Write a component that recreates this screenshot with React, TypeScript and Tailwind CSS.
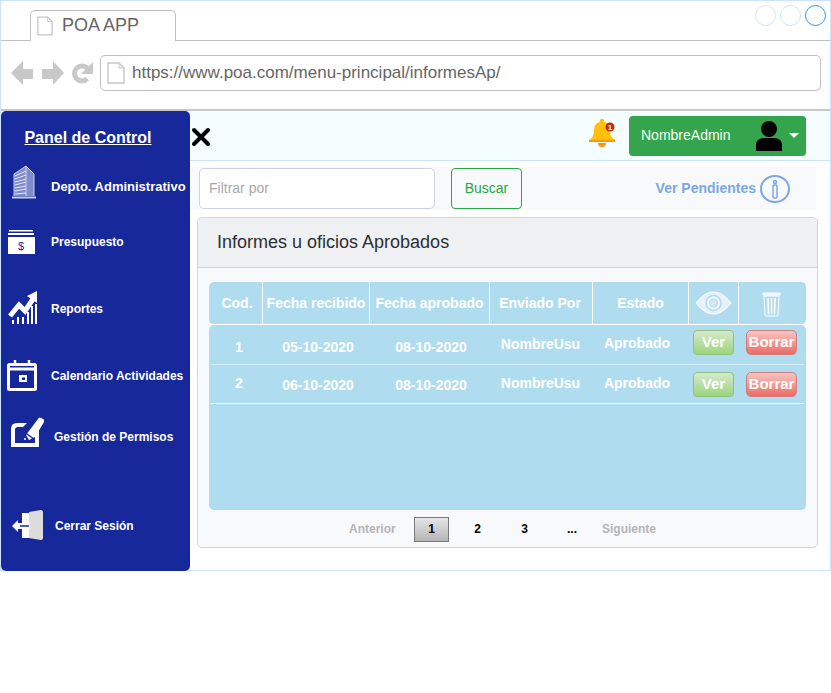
const rows = [
  {
    cod: '1', rec: '05-10-2020', apr: '08-10-2020', row: 'h-[40px] border-[#d5edf8]', codCls: 'pt-[6px]', dateCls: 'pt-[6px]',
    nameCls: '', estCls: 'pb-[2px]', btnCls: 'mb-[5px]',
  },
  {
    cod: '2', rec: '06-10-2020', apr: '08-10-2020', row: 'h-[39px] border-white', codCls: 'pb-[1px]', dateCls: 'pt-[3px]',
    nameCls: 'pb-[2px]', estCls: 'pb-[2px]', btnCls: '',
  },
]

function PageIcon({ className }: { className: string }) {
  return (
    <svg className={className} viewBox="0 0 18 22" fill="#fff" stroke="#c8c8c8" strokeWidth="1.5">
      <path d="M1 1h11l5 5v15H1z" />
      <path d="M12 1v5h5" fill="none" strokeWidth="1" />
    </svg>
  )
}

function BuildingIcon() {
  return (
    <svg className="w-[26px] h-[34px]" viewBox="0 0 26 34" fill="none" stroke="#c9d0ea" strokeWidth="1">
      <path d="M3 31V9L15 1l8 8v22" fill="#7f8ccb" />
      <path d="M15 1v30" />
      <path d="M4 11l11-5M4 14l11-4M4 17l11-3M4 20l11-3M4 23l11-2M4 26l11-2M4 29l11-1" stroke="#e4e8f6" />
      <path d="M1 32.5h24" strokeWidth="2" />
    </svg>
  )
}

function MoneyIcon() {
  return (
    <svg className="w-[27px] h-[24px]" viewBox="0 0 27 24" fill="#fff">
      <rect x="1" y="0" width="24" height="1.5" />
      <rect x="0" y="3" width="26" height="2" />
      <rect x="0" y="7" width="27" height="17" />
      <text x="13" y="20" textAnchor="middle" fontSize="11" fontWeight="400" fill="#17299a" fontFamily="Liberation Sans, sans-serif">$</text>
    </svg>
  )
}

function ChartIcon() {
  return (
    <svg className="w-[29px] h-[33px]" viewBox="0 0 29 33" fill="#fff">
      <path d="M2 25L11 14l6 6L25 8" fill="none" stroke="#fff" strokeWidth="5" />
      <path d="M19 5L29 0v12z" />
      <path d="M4 33v-4h2v4zM9 33v-7h2v7zM14 33v-7h2v7zM19 33V21h2v12zM23 33V15h2v18zM27 33V13h2v20z" />
    </svg>
  )
}

function CalendarIcon() {
  return (
    <svg className="w-[30px] h-[31px]" viewBox="0 0 30 31" fill="none" stroke="#fff" strokeWidth="3">
      <rect x="1.5" y="4.5" width="27" height="25" rx="1" />
      <path d="M1.5 9h27" />
      <path d="M8 0v5M22 0v5" strokeWidth="2.5" />
      <rect x="12" y="15" width="8" height="7" fill="#fff" stroke="none" />
      <rect x="15" y="17.5" width="3" height="2.5" fill="#17299a" stroke="none" />
    </svg>
  )
}

function PermisoIcon() {
  return (
    <svg className="w-[35px] h-[32px]" viewBox="0 0 35 32" fill="none">
      <path d="M0 31V13Q0 7 6 7h10l-4 4H7q-3 0-3 3v13h20V18l4-5v18z" fill="#fff" />
      <path d="M15 19L27 3c2-3 7-1 6 3L24 21l-6 3z" fill="#fff" />
      <path d="M13 16l10 7" stroke="#17299a" strokeWidth="1.5" />
      <path d="M29 1l4 2" stroke="#17299a" strokeWidth="1" />
      <path d="M13 23h2" stroke="#fff" strokeWidth="1.5" />
    </svg>
  )
}

function LogoutIcon() {
  return (
    <svg className="w-[31px] h-[31px]" viewBox="0 0 31 31">
      <path d="M10 8V3h8v25h-8v-6z" fill="#fff" />
      <path d="M17 2l12-2c1 0 2 1 2 2v26c0 1-1 2-2 2l-12-2z" fill="#dcdcdc" />
      <path d="M0 16l6-6v3h12v6H6v3z" fill="#fff" />
      <path d="M8 16h9" stroke="#17299a" strokeWidth="1.5" />
    </svg>
  )
}

const menu = [
  { label: 'Depto. Administrativo', icon: <BuildingIcon />, cls: 'h-[44px] pl-[10px] gap-[14px]', text: 'text-[13px]', iconCls: 'mb-[10px]' },
  { label: 'Presupuesto', icon: <MoneyIcon />, cls: 'h-[66px] pl-[7px] gap-[16px]', text: 'text-[12px]', iconCls: '' },
  { label: 'Reportes', icon: <ChartIcon />, cls: 'h-[68px] pl-[7px] gap-[14px]', text: 'text-[12px]', iconCls: 'mb-[4px]' },
  { label: 'Calendario Actividades', icon: <CalendarIcon />, cls: 'h-[66px] pl-[6px] gap-[14px]', text: 'text-[12px]', iconCls: 'mb-[2px]' },
  { label: 'Gestión de Permisos', icon: <PermisoIcon />, cls: 'h-[56px] pl-[10px] gap-[8px]', text: 'text-[12px]', iconCls: 'mb-[10px]' },
  { label: 'Cerrar Sesión', icon: <LogoutIcon />, cls: 'h-[40px] mt-[41px] pl-[11px] gap-[12px]', text: 'text-[12px]', iconCls: 'mb-[2px]' },
]

export default function App() {
  return (
    <div className="w-[831px] h-[693px] bg-white font-['Liberation_Sans',Arial,sans-serif]">
      <div className="h-[571px] border border-[#cce4fb] flex flex-col">
        {/* browser chrome */}
        <div className="h-[40px] shrink-0 border-b border-[#c0c0c0] pl-[29px] flex justify-between">
          <div className="w-[146px] h-[31px] mt-[9px] bg-white border border-b-0 border-[#c0c0c0] rounded-t-[5px] flex items-center pl-[6px] gap-[9px]">
            <PageIcon className="w-[16px] h-[20px]" />
            <span className="text-[18px] text-[#666] mb-[2px]">POA APP</span>
          </div>
          <div className="flex gap-[4px] mt-[4px] mr-[4px]">
            <div className="w-[21px] h-[21px] rounded-full border border-[#cce4fb]" />
            <div className="w-[21px] h-[21px] rounded-full border border-[#cce4fb]" />
            <div className="w-[21px] h-[21px] rounded-full border border-[#2b94ee]" />
          </div>
        </div>
        <div className="h-[70px] shrink-0 border-b-2 border-[#c8c8c8] flex items-start pl-[10px] pt-[14px]">
          <svg className="w-[88px] h-[28px] mt-[4px]" viewBox="0 0 88 28" fill="#c8c8c8">
            <path d="M0 14L12 2v8h10v10H12v6z" />
            <path d="M31 10h11V2l11 12-11 12v-6H31z" />
            <path d="M76.300 19.800A7.500 7.500 0 1 1 76.300 9.200" fill="none" stroke="#c8c8c8" strokeWidth="5" />
            <path d="M82 3v12H70z" />
          </svg>
          <div className="w-[721px] h-[36px] ml-[1px] border border-[#c0c0c0] rounded-[5px] flex items-center pl-[6px] gap-[7px] bg-white">
            <PageIcon className="w-[18px] h-[22px]" />
            <span className="text-[17px] text-[#666]">https://www.poa.com/menu-principal/informesAp/</span>
          </div>
        </div>

        <div className="flex-1 flex min-h-0">
          {/* sidebar */}
          <aside className="w-[189px] h-[460px] shrink-0 bg-[#17299a] rounded-[5px] text-white font-bold">
            <div className="h-[54px] flex items-end justify-center pr-[15px] pb-[18px]">
              <span className="text-[16px] underline leading-[18px]">Panel de Control</span>
            </div>
            {menu.map((m) => (
              <div key={m.label} className={`flex items-center ${m.cls}`}>
                <div className={`shrink-0 flex ${m.iconCls}`}>{m.icon}</div>
                <span className={`${m.text} whitespace-nowrap`}>{m.label}</span>
              </div>
            ))}
          </aside>

          <main className="flex-1 min-w-0">
            <header className="h-[50px] bg-[#f5feff] border-b border-[#cce4fb] flex items-center justify-between pr-[24px]">
              <svg className="w-[20px] h-[20px] ml-[1px] mt-[3px]" viewBox="0 0 20 20" stroke="#000" strokeWidth="4" strokeLinecap="round">
                <path d="M3 3l14 14M17 3L3 17" />
              </svg>
              <div className="flex items-center">
                <svg className="w-[28px] h-[30px] mr-[13px] mb-[5px]" viewBox="0 0 28 30">
                  <path d="M14 1a2 2 0 0 1 2 3c5 1 6 5 6 9 0 5 2 7 5 9v2H1v-2c3-2 5-4 5-9 0-4 1-8 6-9a2 2 0 0 1 2-3z" fill="#ffc107" />
                  <path d="M1 22h26v2H1z" fill="#ff9800" />
                  <path d="M10 25h8a4 4 0 0 1-8 0z" fill="#ff9800" />
                  <circle cx="22" cy="9" r="4.5" fill="#c62a0c" />
                  <text x="22" y="12" textAnchor="middle" fontSize="8" fontWeight="700" fill="#fff">1</text>
                </svg>
                <div className="w-[177px] h-[40px] bg-[#34a54d] rounded-[4px] flex items-center pl-[12px] text-[#f4fff4]">
                  <span className="text-[14px] w-[115px]">NombreAdmin</span>
                  <svg className="w-[26px] h-[30px]" viewBox="0 0 26 30" fill="#000">
                    <circle cx="13" cy="8" r="8" />
                    <path d="M0 30v-6c0-5 4-7 8-7h10c4 0 8 2 8 7v6z" />
                  </svg>
                  <div className="ml-[7px] w-0 h-0 border-x-[5px] border-x-transparent border-t-[5px] border-t-white" />
                </div>
              </div>
            </header>

            <div className="h-[43px] mt-[6px] ml-[1px] mr-[14px] bg-[#f8f9fa] flex items-center pl-[8px] pr-[26px]">
              <div className="w-[236px] h-[41px] bg-white border border-[#ccd3de] rounded-[5px] flex items-center pl-[9px] text-[14px] text-[#a8a8a8]">Filtrar por</div>
              <div className="w-[71px] h-[41px] ml-[16px] border border-[#28a745] rounded-[4px] flex items-center justify-center text-[14px] text-[#28a745]">Buscar</div>
              <span className="ml-auto text-[14px] font-bold text-[#7da7e2]">Ver Pendientes</span>
              <svg className="w-[30px] h-[28px] ml-[4px]" viewBox="0 0 30 28" fill="none" stroke="#7da7e2">
                <ellipse cx="15" cy="14" rx="14" ry="13" strokeWidth="2" />
                <rect x="13" y="10" width="4" height="13" rx="1" strokeWidth="1.5" />
                <circle cx="15" cy="7" r="1.5" strokeWidth="1.5" />
              </svg>
            </div>

            <section className="w-[621px] h-[331px] mt-[7px] ml-[7px] border border-[#d2d4d7] rounded-[5px] bg-[#f8f9fb] flex flex-col">
              <div className="h-[50px] shrink-0 bg-[#eff0f2] border-b border-[#d2d4d7] rounded-t-[5px] flex items-center pl-[19px] text-[18px] text-[#2b2f33]">
                Informes u oficios Aprobados
              </div>
              <div className="px-[11px] pt-[14px]">
                <div className="h-[43px] bg-[#b0dcf0] rounded-[5px] grid grid-cols-[54px_107px_120px_103px_96px_50px_67px] border-b border-white text-white font-bold text-[14px] text-center">
                  <div className="flex items-center justify-center border-r border-white whitespace-nowrap pl-[3px]">Cod.</div>
                  <div className="flex items-center justify-center border-r border-white whitespace-nowrap">Fecha recibido</div>
                  <div className="flex items-center justify-center border-r border-white whitespace-nowrap">Fecha aprobado</div>
                  <div className="flex items-center justify-center border-r border-white whitespace-nowrap pr-[2px]">Enviado Por</div>
                  <div className="flex items-center justify-center border-r border-white whitespace-nowrap">Estado</div>
                  <div className="flex items-center justify-center border-r border-white">
                    <svg className="w-[37px] h-[24px]" viewBox="0 0 37 24" fill="#e6f1fd" stroke="#fff">
                      <path d="M1 12C8 3 14 1 18.500 1S29 3 36 12c-7 9-13 11-17.500 11S8 21 1 12z" />
                      <circle cx="18.500" cy="12" r="7.500" fill="#eef6fe" stroke="#b0dcf0" strokeWidth="1.500" />
                      <circle cx="18.500" cy="12" r="4" fill="#d4e8f8" stroke="#b0dcf0" strokeWidth="1" />
                    </svg>
                  </div>
                  <div className="flex items-center justify-center pr-[2px]">
                    <svg className="w-[19px] h-[27px]" viewBox="0 0 19 27" fill="#e6f1fd" stroke="#fff">
                      <path d="M1 3h17v2H1z" />
                      <path d="M2 6h15l-1 19a1.500 1.500 0 0 1-1.500 1h-10A1.500 1.500 0 0 1 3 25z" fill="#b0dcf0" />
                      <path d="M6 8l.5 16M9.500 8v16M13 8l-.5 16" strokeWidth="1.500" />
                    </svg>
                  </div>
                </div>
                <div className="h-[185px] bg-[#b0dcf0] rounded-[5px]">
                  {rows.map((r) => (
                    <div key={r.cod} className={`mx-[2px] grid grid-cols-[52px_107px_120px_103px_96px_50px_65px] text-white font-bold text-[14px] border-b ${r.row}`}>
                      <div className={`flex items-center justify-center pl-[4px] ${r.codCls}`}>{r.cod}</div>
                      <div className={`flex items-center justify-center pl-[3px] ${r.dateCls}`}>{r.rec}</div>
                      <div className={`flex items-center justify-center pl-[2px] ${r.dateCls}`}>{r.apr}</div>
                      <div className={`flex items-center justify-center pr-[2px] ${r.nameCls}`}>NombreUsu</div>
                      <div className={`flex items-center justify-center pr-[8px] ${r.estCls}`}>Aprobado</div>
                      <div className="flex items-center pl-[4px]">
                        <div className={`w-[41px] h-[25px] shrink-0 rounded-[4px] border border-[#90c080] bg-gradient-to-b from-[#d6e8cc] to-[#9dd47c] flex items-center justify-center text-[15px] ${r.btnCls}`}>Ver</div>
                      </div>
                      <div className="flex items-center pl-[7px]">
                        <div className={`w-[51px] h-[25px] shrink-0 rounded-[5px] border border-[#cc7f80] bg-gradient-to-b from-[#f6c4c2] to-[#ea6b67] flex items-center justify-center text-[15px] ${r.btnCls}`}>Borrar</div>
                      </div>
                    </div>
                  ))}
                </div>
                <div className="flex items-center h-[38px] text-[12px] font-bold pl-[140px]">
                  <span className="text-[#b5b5b5] w-[65px]">Anterior</span>
                  <span className="w-[35px] h-[25px] border border-[#7a7a7a] bg-gradient-to-b from-[#e6e6e6] to-[#b5b5b5] flex items-center justify-center text-black">1</span>
                  <span className="w-[57px] text-center text-black">2</span>
                  <span className="w-[37px] text-center text-black">3</span>
                  <span className="w-[58px] text-center text-black">...</span>
                  <span className="text-[#b5b5b5] ml-[1px]">Siguiente</span>
                </div>
              </div>
            </section>
          </main>
        </div>
      </div>
    </div>
  )
}
